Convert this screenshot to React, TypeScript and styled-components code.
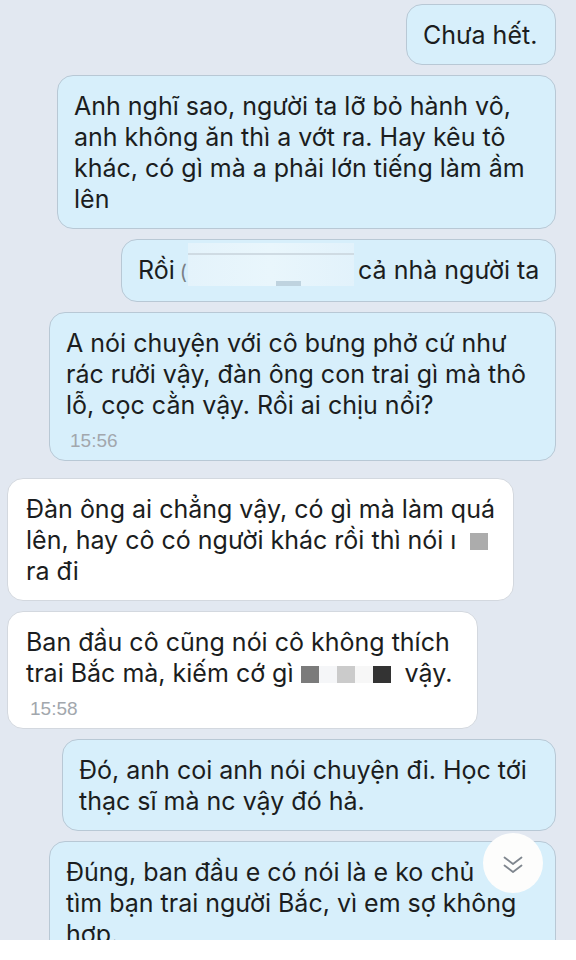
import styled, { createGlobalStyle } from 'styled-components'

const GlobalStyle = createGlobalStyle`
	html, body {
		margin: 0;
		padding: 0;
		background: #e2e8f1;
	}
	body {
		font-family: Inter, "Noto Sans", "DejaVu Sans", sans-serif;
		color: #1b1d20;
	}
`

type Side = 'me' | 'them'

type Chunk = string | { redact: 'patch' | 'nib' | 'square'; tone?: string }

type Message = {
	side: Side
	width: number
	lines: Chunk[][]
	time?: string
	turn?: boolean
}

const messages: Message[] = [
	{ side: 'me', width: 150, lines: [['Chưa hết.']] },
	{
		side: 'me',
		width: 499,
		lines: [
			['Anh nghĩ sao, người ta lỡ bỏ hành vô,'],
			['anh không ăn thì a vớt ra. Hay kêu tô'],
			['khác, có gì mà a phải lớn tiếng làm ầm'],
			['lên'],
		],
	},
	{
		side: 'me',
		width: 435,
		lines: [['Rồi', { redact: 'nib' }, { redact: 'patch' }, 'cả nhà người ta']],
	},
	{
		side: 'me',
		width: 507,
		lines: [
			['A nói chuyện với cô bưng phở cứ như'],
			['rác rưởi vậy, đàn ông con trai gì mà thô'],
			['lỗ, cọc cằn vậy. Rồi ai chịu nổi?'],
		],
		time: '15:56',
	},
	{
		side: 'them',
		width: 507,
		turn: true,
		lines: [
			['Đàn ông ai chẳng vậy, có gì mà làm quá'],
			['lên, hay cô có người khác rồi thì nói ı  ', { redact: 'square', tone: '#acacac' }],
			['ra đi'],
		],
	},
	{
		side: 'them',
		width: 471,
		lines: [
			['Ban đầu cô cũng nói cô không thích'],
			[
				'trai Bắc mà, kiếm cớ gì ',
				{ redact: 'square', tone: '#7b7b7b' },
				{ redact: 'square', tone: '#f5f6f8' },
				{ redact: 'square', tone: '#cbcbcb' },
				{ redact: 'square', tone: '#f7f7f7' },
				{ redact: 'square', tone: '#333333' },
				'  vậy.',
			],
		],
		time: '15:58',
	},
	{
		side: 'me',
		width: 494,
		lines: [['Đó, anh coi anh nói chuyện đi. Học tới'], ['thạc sĩ mà nc vậy đó hả.']],
	},
	{
		side: 'me',
		width: 507,
		lines: [
			['Đúng, ban đầu e có nói là e ko chủ'],
			['tìm bạn trai người Bắc, vì em sợ không'],
			['hợp.'],
		],
	},
]

const renderChunk = (chunk: Chunk, i: number) => {
	if (typeof chunk === 'string') return <span key={i}>{chunk}</span>
	if (chunk.redact === 'patch') return <Patch key={i} />
	if (chunk.redact === 'nib') return <Nib key={i}>(</Nib>
	return <Square key={i} $tone={chunk.tone ?? '#aaa'} />
}

export default function App() {
	return (
		<>
			<GlobalStyle />
			<Page>
				<Thread>
					{messages.map((m, i) => (
						<Bubble key={i} $side={m.side} $w={m.width} $turn={m.turn}>
							{m.lines.map((line, j) => (
								<Line key={j}>{line.map(renderChunk)}</Line>
							))}
							{m.time && <Time>{m.time}</Time>}
						</Bubble>
					))}
				</Thread>
				<Footer />
				<ScrollDown aria-label="Scroll to latest">
					<svg width="20" height="18" viewBox="0 0 20 18" fill="none">
						<path
							d="M1.5 1.5 L10 8 L18.5 1.5 M1.5 9.5 L10 16 L18.5 9.5"
							stroke="#7f868e"
							strokeWidth="1.8"
							strokeLinecap="round"
							strokeLinejoin="round"
						/>
					</svg>
				</ScrollDown>
			</Page>
		</>
	)
}

// Styles
const Page = styled.div`
	position: relative;
	display: flex;
	flex-direction: column;
	width: 576px;
	height: 960px;
	overflow: hidden;
`

const Thread = styled.div`
	flex: 1;
	display: flex;
	flex-direction: column;
	gap: 10px;
	padding: 4px 20px 0 7px;
	overflow: hidden;
`

const Bubble = styled.div<{ $side: Side; $w: number; $turn?: boolean }>`
	box-sizing: border-box;
	flex-shrink: 0;
	width: ${(p) => p.$w}px;
	align-self: ${(p) => (p.$side === 'me' ? 'flex-end' : 'flex-start')};
	margin-top: ${(p) => (p.$turn ? '7px' : '0')};
	padding: 15px 16px 13px ${(p) => (p.$side === 'me' ? '16px' : '18px')};
	border-radius: 16px;
	background: ${(p) => (p.$side === 'me' ? '#d7effb' : '#ffffff')};
	border: 1.5px solid ${(p) => (p.$side === 'me' ? '#b8c8d5' : '#d3d8df')};
	font-size: 25px;
	line-height: 31px;
`

const Line = styled.div`
	white-space: pre;
`

const Time = styled.div`
	margin-top: 10px;
	margin-bottom: -4px;
	padding-left: 4px;
	font-family: "Liberation Sans", Arial, sans-serif;
	font-size: 19px;
	line-height: 20px;
	color: #a2a7ad;
`

const Patch = styled.span`
	display: inline-block;
	width: 166px;
	height: 31px;
	vertical-align: top;
	margin: -12px 4px 0 1px;
	padding-top: 12px;
	background:
		linear-gradient(#cfdbe3, #cfdbe3) 0 10px / 100% 2px no-repeat,
		linear-gradient(#bfd3df, #bfd3df) 88px 38px / 25px 8px no-repeat,
		linear-gradient(90deg, #e4f3fb, #e9f6fc 50%, #e2f2fb);
`

const Nib = styled.span`
	margin-left: 5px;
	color: #7a8086;
	font-size: 20px;
`

const Square = styled.span<{ $tone: string }>`
	display: inline-block;
	width: 18px;
	height: 17px;
	background: ${(p) => p.$tone};
	vertical-align: -1px;
`

const Footer = styled.div`
	flex-shrink: 0;
	height: 20px;
	background: #ffffff;
`

const ScrollDown = styled.button`
	position: absolute;
	left: 483px;
	top: 833px;
	width: 60px;
	height: 60px;
	border: none;
	border-radius: 50%;
	background: #fdfdfc;
	display: flex;
	align-items: center;
	justify-content: center;
	padding: 0;
	padding-top: 4px;
`
